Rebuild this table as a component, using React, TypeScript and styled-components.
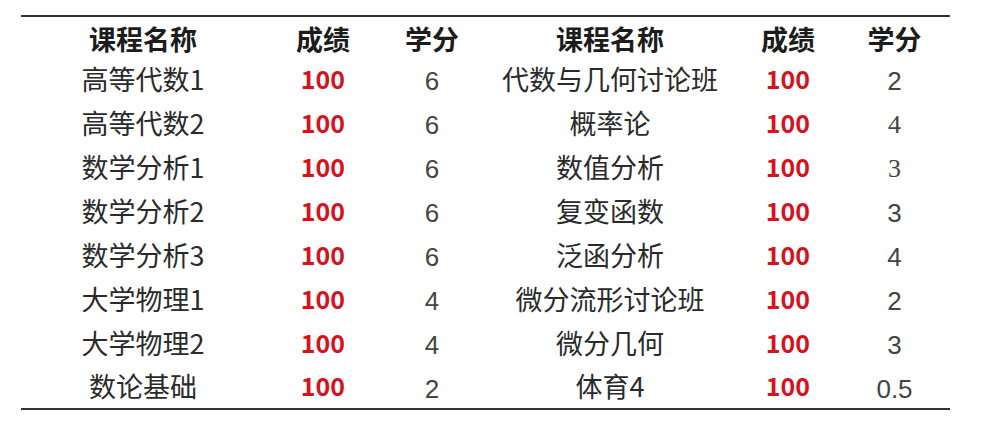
import styled, { createGlobalStyle } from "styled-components";

const GlobalStyle = createGlobalStyle`
  html, body {
    margin: 0;
    padding: 0;
    background: #ffffff;
  }
  body {
    font-family: "Noto Sans CJK SC", "Liberation Sans", sans-serif;
  }
`;

interface Course {
  name: string;
  score: number;
  credit: string;
  serif?: boolean;
}

const LEFT: Course[] = [
  { name: "高等代数1", score: 100, credit: "6" },
  { name: "高等代数2", score: 100, credit: "6" },
  { name: "数学分析1", score: 100, credit: "6" },
  { name: "数学分析2", score: 100, credit: "6" },
  { name: "数学分析3", score: 100, credit: "6" },
  { name: "大学物理1", score: 100, credit: "4" },
  { name: "大学物理2", score: 100, credit: "4" },
  { name: "数论基础", score: 100, credit: "2" },
];

const RIGHT: Course[] = [
  { name: "代数与几何讨论班", score: 100, credit: "2" },
  { name: "概率论", score: 100, credit: "4", serif: true },
  { name: "数值分析", score: 100, credit: "3", serif: true },
  { name: "复变函数", score: 100, credit: "3" },
  { name: "泛函分析", score: 100, credit: "4" },
  { name: "微分流形讨论班", score: 100, credit: "2" },
  { name: "微分几何", score: 100, credit: "3" },
  { name: "体育4", score: 100, credit: "0.5" },
];

// column widths, left half then right half
const COLS = [244, 116, 102, 254, 102, 111];

const Page = styled.div`
  padding: 15px 0 0 21px;
  width: 984px;
  height: 433px;
  box-sizing: border-box;
`;

const Table = styled.table`
  border-collapse: collapse;
  table-layout: fixed;
  width: 929px;
  border-top: 2px solid #333;
  border-bottom: 2px solid #333;
`;

const HeadCell = styled.th`
  height: 38px;
  padding: 2px 0 0;
  font-size: 27px;
  font-weight: 700;
  color: #1c1c1c;
  text-align: center;
  vertical-align: middle;
  line-height: 1;
`;

const Cell = styled.td<{ $kind?: "name" | "score" | "credit"; $serif?: boolean }>`
  height: 44px;
  padding: ${(p) => (p.$kind === "credit" ? "4px 0 0" : "0 0 2px")};
  box-sizing: border-box;
  text-align: center;
  vertical-align: middle;
  line-height: 1;
  font-size: ${(p) => (p.$kind === "score" ? "25px" : p.$kind === "name" ? "27px" : "26px")};
  font-weight: ${(p) => (p.$kind === "score" ? 700 : 400)};
  color: ${(p) =>
    p.$kind === "score" ? "#d8111c" : p.$kind === "credit" ? "#444" : "#2a2a2a"};
  font-family: ${(p) =>
    p.$serif
      ? '"Liberation Serif", serif'
      : p.$kind === "credit"
      ? '"Liberation Sans", sans-serif'
      : '"Noto Sans CJK SC", "Liberation Sans", sans-serif'};
`;

export default function App() {
  return (
    <Page>
      <GlobalStyle />
      <Table>
        <colgroup>
          {COLS.map((w, i) => (
            <col key={i} style={{ width: w }} />
          ))}
        </colgroup>
        <thead>
          <tr>
            <HeadCell>课程名称</HeadCell>
            <HeadCell>成绩</HeadCell>
            <HeadCell>学分</HeadCell>
            <HeadCell>课程名称</HeadCell>
            <HeadCell>成绩</HeadCell>
            <HeadCell>学分</HeadCell>
          </tr>
        </thead>
        <tbody>
          {LEFT.map((l, i) => {
            const r = RIGHT[i];
            return (
              <tr key={i}>
                <Cell $kind="name">{l.name}</Cell>
                <Cell $kind="score">{l.score}</Cell>
                <Cell $kind="credit">{l.credit}</Cell>
                <Cell $kind="name">{r.name}</Cell>
                <Cell $kind="score">{r.score}</Cell>
                <Cell $kind="credit" $serif={r.serif}>
                  {r.credit}
                </Cell>
              </tr>
            );
          })}
        </tbody>
      </Table>
    </Page>
  );
}
